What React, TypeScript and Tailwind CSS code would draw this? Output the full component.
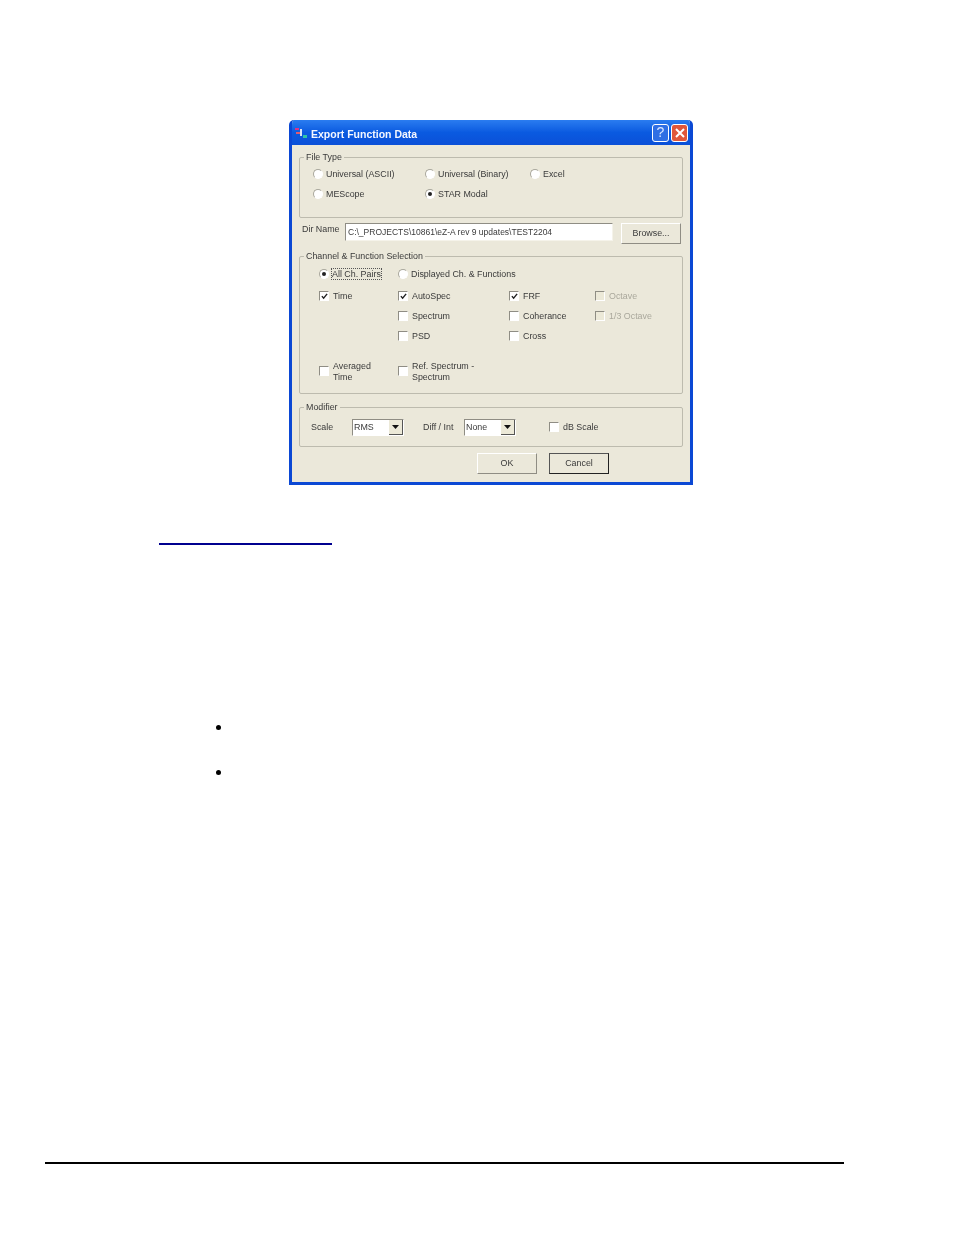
import React from 'react';

const Radio = ({ checked = false }: { checked?: boolean }) => (
  <span className="relative mr-[3px] flex h-[10px] w-[10px] shrink-0 items-center justify-center rounded-full border border-[#a9a79c] border-r-white border-b-white bg-white">
    {checked && <span className="h-[4px] w-[4px] rounded-full bg-[#222]" />}
  </span>
);

const Check = ({ checked = false, disabled = false }: { checked?: boolean; disabled?: boolean }) => (
  <span
    className={`mr-[4px] flex h-[10px] w-[10px] shrink-0 items-center justify-center border border-[#8f8d84] border-r-white border-b-white ${
      disabled ? 'bg-[#ece9d8] border-r-[#f5f3ea] border-b-[#f5f3ea]' : 'bg-white'
    }`}
  >
    {checked && (
      <svg viewBox="0 0 8 8" className="h-[7px] w-[7px]">
        <path d="M1 3.5 L3 6 L7 1" fill="none" stroke="#222" strokeWidth="1.6" />
      </svg>
    )}
  </span>
);

const Group = ({ title, className, children }: { title: string; className: string; children: React.ReactNode }) => (
  <div className={`relative rounded-[2px] border border-[#bdbbae] ${className}`}>
    <span className="absolute left-[4px] top-[-7px] bg-[#ebe8da] px-[2px] text-[8.9px] leading-[12px]">{title}</span>
    {children}
  </div>
);

const Option = ({ kind, label, checked, disabled }: { kind: 'radio' | 'check'; label: React.ReactNode; checked?: boolean; disabled?: boolean }) => (
  <div className="flex h-[20px] items-center">
    {kind === 'radio' ? <Radio checked={checked} /> : <Check checked={checked} disabled={disabled} />}
    <span className={disabled ? 'text-[#aaa89c]' : ''}>{label}</span>
  </div>
);

const Combo = ({ value, width }: { value: string; width: string }) => (
  <div className={`mt-[1px] flex h-[17px] items-center justify-between border border-[#8f8d84] border-r-white border-b-white bg-white pl-[1px] ${width}`}>
    <span>{value}</span>
    <span className="flex h-[15px] w-[14px] items-center justify-center border-r border-b border-[#555] bg-[#ece9d8]">
      <svg viewBox="0 0 7 4" className="h-[4px] w-[7px]">
        <path d="M0 0 H7 L3.5 4 Z" fill="#111" />
      </svg>
    </span>
  </div>
);

const Button = ({ label, isDefault = false, className = '' }: { label: string; isDefault?: boolean; className?: string }) => (
  <div
    className={`flex h-[21px] w-[60px] items-center justify-center border text-[8.9px] ${
      isDefault ? 'border-[#222] border-t-[#555] border-l-[#555]' : 'border-white border-r-[#8f8d84] border-b-[#8f8d84]'
    } ${className}`}
  >
    {label}
  </div>
);

export default function App() {
  return (
    <div className="h-[1235px] w-[954px] overflow-hidden bg-white pt-[120px] font-['Liberation_Sans',sans-serif]">
      {/* dialog */}
      <div className="ml-[289px] h-[365px] w-[404px] overflow-hidden rounded-t-[5px] border-x-[3px] border-b-[3px] border-[#0b48d4] bg-[#ebe8da] text-[8.9px] leading-[11px] text-[#3a3a3a] blur-[0.3px]">
        <div className="-mx-[3px] flex h-[25px] items-center bg-gradient-to-b from-[#2a7cf0] via-[#0a5ae0] to-[#0b50d8] pl-[6px] pr-[5px]">
          <svg viewBox="0 0 13 13" className="mr-[3px] mt-[2px] h-[13px] w-[13px]">
            <rect x="0" y="1" width="4" height="2" fill="#d8328c" />
            <rect x="5" y="2" width="2" height="7" fill="#d8e4f8" />
            <rect x="1" y="5" width="4" height="2" fill="#e05a70" />
            <rect x="8" y="8" width="4" height="3" fill="#2ec4a8" />
          </svg>
          <span className="mt-[3px] text-[10.5px] font-bold text-[#f4f7ff]">Export Function Data</span>
          <span className="ml-auto flex h-[18px] w-[17px] items-center justify-center rounded-[3px] border border-white bg-[#2f6fe4] text-[14px] text-[#d8e6ff]">?</span>
          <span className="ml-[2px] flex h-[18px] w-[17px] items-center justify-center rounded-[3px] border border-white bg-[#e0573a]">
            <svg viewBox="0 0 10 10" className="h-[10px] w-[10px]">
              <path d="M1 1 L9 9 M9 1 L1 9" stroke="#fff" strokeWidth="2" />
            </svg>
          </span>
        </div>

        <div className="px-[7px] pt-[12px]">
          <Group title="File Type" className="h-[61px] pl-[13px] pt-[6px]">
            <div className="grid grid-cols-[112px_105px_1fr]">
              <Option kind="radio" label="Universal (ASCII)" />
              <Option kind="radio" label="Universal (Binary)" />
              <Option kind="radio" label="Excel" />
              <Option kind="radio" label="MEScope" />
              <Option kind="radio" label="STAR Modal" checked />
            </div>
          </Group>

          <div className="mt-[5px] flex h-[21px] items-start">
            <span className="ml-[3px] mt-[1px] w-[43px]">Dir Name</span>
            <div className="flex h-[18px] w-[268px] items-center border border-[#8f8d84] border-r-[#f5f3ea] border-b-[#f5f3ea] bg-white pl-[2px] text-[8.5px]">
              C:\_PROJECTS\10861\eZ-A rev 9 updates\TEST2204
            </div>
            <Button label="Browse..." className="ml-[8px]" />
          </div>

          <Group title="Channel & Function Selection" className="mt-[12px] h-[138px] pl-[19px] pt-[7px]">
            <div className="grid grid-cols-[79px_111px_86px_1fr]">
              <Option kind="radio" checked label={<span className="outline-1 outline-dotted outline-[#555]">All Ch. Pairs</span>} />
              <div className="col-span-3">
                <Option kind="radio" label="Displayed Ch. & Functions" />
              </div>
            </div>
            <div className="mt-[2px] grid grid-cols-[79px_111px_86px_1fr]">
              <Option kind="check" checked label="Time" />
              <Option kind="check" checked label="AutoSpec" />
              <Option kind="check" checked label="FRF" />
              <Option kind="check" disabled label="Octave" />
              <span />
              <Option kind="check" label="Spectrum" />
              <Option kind="check" label="Coherance" />
              <Option kind="check" disabled label="1/3 Octave" />
              <span />
              <Option kind="check" label="PSD" />
              <Option kind="check" label="Cross" />
            </div>
            <div className="mt-[15px] grid grid-cols-[79px_111px_86px_1fr]">
              <Option kind="check" label={<span className="mt-[1px] block">Averaged<br />Time</span>} />
              <div className="col-span-3">
                <Option kind="check" label={<span className="mt-[1px] block">Ref. Spectrum -<br />Spectrum</span>} />
              </div>
            </div>
          </Group>

          <Group title="Modifier" className="mt-[13px] flex h-[40px] items-center pl-[11px]">
            <span className="mt-[1px] w-[41px]">Scale</span>
            <Combo value="RMS" width="w-[52px]" />
            <span className="ml-[19px] mt-[1px] w-[41px]">Diff / Int</span>
            <Combo value="None" width="w-[52px]" />
            <span className="ml-[33px] flex items-center">
              <Check />
              dB Scale
            </span>
          </Group>

          <div className="mt-[6px] flex gap-[12px] pl-[178px]">
            <Button label="OK" />
            <Button label="Cancel" isDefault />
          </div>
        </div>
      </div>

      {/* link underline */}
      <div className="ml-[159px] mt-[58px] h-[2px] w-[173px] bg-[#00008f]" />

      {/* bullets */}
      <div className="ml-[216px] mt-[180px] h-[5px] w-[5px] rounded-full bg-black" />
      <div className="ml-[216px] mt-[40px] h-[5px] w-[5px] rounded-full bg-black" />

      {/* footer rule */}
      <div className="ml-[45px] mt-[387px] h-[2px] w-[799px] bg-black" />
    </div>
  );
}
